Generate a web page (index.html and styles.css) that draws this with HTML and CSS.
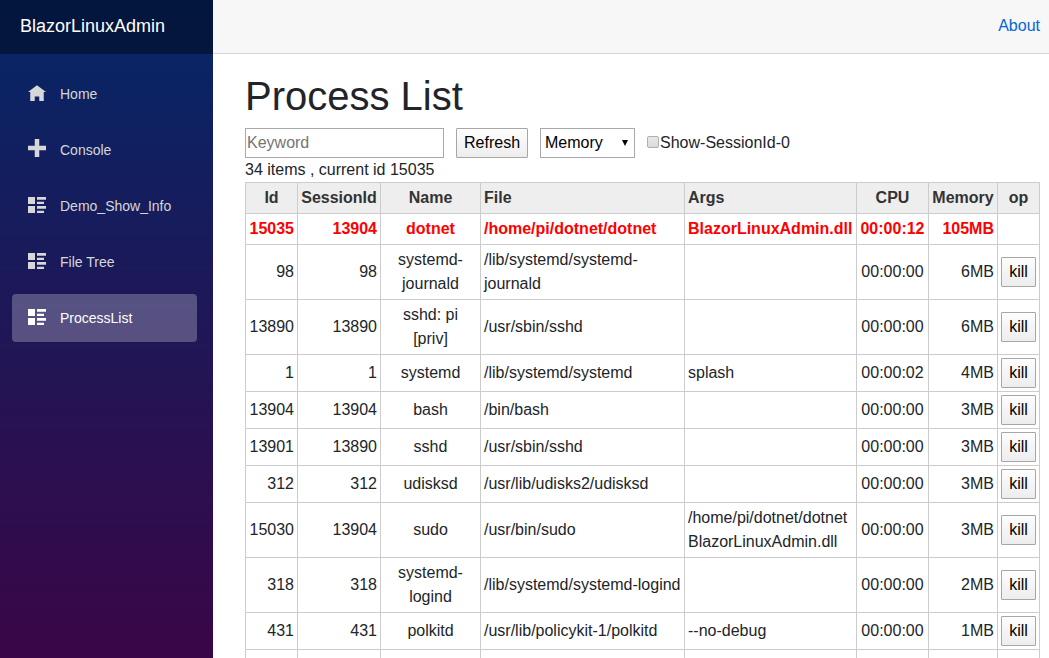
FILE: index.html
```html
<!DOCTYPE html>
<html lang="en">
<head>
<meta charset="utf-8">
<title>BlazorLinuxAdmin</title>
<link rel="stylesheet" href="styles.css">
</head>
<body>
<svg class="sprite" aria-hidden="true">
  <symbol id="home" viewBox="0 -1 8 8"><path d="M4 0l-4 3h1v4h2v-2h2v2h2v-4.03l1 .03-4-3z"/></symbol>
  <symbol id="plus" viewBox="0 0 8 8"><path d="M3 0v3h-3v2h3v3h2v-3h3v-2h-3v-3h-2z"/></symbol>
  <symbol id="list" viewBox="0 0 18 18"><path d="M0 2h7v7h-7zM9 2h9v2.7h-9zM9 6.7h7v2.3h-7zM0 11h7v7h-7zM9 11h9v2.7h-9zM9 15.7h7v2.3h-7z"/></symbol>
</svg>
<div class="app">
  <aside class="sidebar">
    <div class="brand-row"><a class="brand" href="#">BlazorLinuxAdmin</a></div>
    <nav class="nav">
      <a class="nav-link" href="#"><svg class="icon"><use href="#home"/></svg>Home</a>
      <a class="nav-link" href="#"><svg class="icon"><use href="#plus"/></svg>Console</a>
      <a class="nav-link" href="#"><svg class="icon"><use href="#list"/></svg>Demo_Show_Info</a>
      <a class="nav-link" href="#"><svg class="icon"><use href="#list"/></svg>File Tree</a>
      <a class="nav-link active" href="#" aria-current="page"><svg class="icon"><use href="#list"/></svg>ProcessList</a>
    </nav>
  </aside>
  <div class="main">
    <header class="top-row"><a class="about" href="#">About</a></header>
    <main class="content">
      <h1 class="title">Process List</h1>
      <div class="toolbar">
        <input class="keyword" type="text" placeholder="Keyword" aria-label="Keyword">
        <button class="btn" type="button">Refresh</button>
        <span class="select-wrap">
          <select class="sort" aria-label="Sort by"><option>Memory</option><option>CPU</option></select>
          <svg class="arrow" viewBox="0 0 6 6" aria-hidden="true"><path d="M0 0h6L3 6z"/></svg>
        </span>
        <label class="check"><input class="checkbox" type="checkbox">Show-SessionId-0</label>
      </div>
      <div class="summary">34 items , current id 15035</div>
      <table class="processes">
        <colgroup><col class="c-id"><col class="c-session"><col class="c-name"><col class="c-file"><col><col class="c-cpu"><col class="c-memory"><col class="c-op"></colgroup>
        <thead>
          <tr><th>Id</th><th>SessionId</th><th>Name</th><th class="left">File</th><th class="left">Args</th><th>CPU</th><th>Memory</th><th>op</th></tr>
        </thead>
        <tbody>
          <tr class="current"><td class="num">15035</td><td class="num">13904</td><td>dotnet</td><td class="left">/home/pi/dotnet/dotnet</td><td class="left">BlazorLinuxAdmin.dll</td><td>00:00:12</td><td class="num">105MB</td><td></td></tr>
          <tr><td class="num">98</td><td class="num">98</td><td>systemd-journald</td><td class="left">/lib/systemd/systemd-journald</td><td></td><td>00:00:00</td><td class="num">6MB</td><td><button class="btn" type="button">kill</button></td></tr>
          <tr><td class="num">13890</td><td class="num">13890</td><td>sshd: pi [priv]</td><td class="left">/usr/sbin/sshd</td><td></td><td>00:00:00</td><td class="num">6MB</td><td><button class="btn" type="button">kill</button></td></tr>
          <tr><td class="num">1</td><td class="num">1</td><td>systemd</td><td class="left">/lib/systemd/systemd</td><td class="left">splash</td><td>00:00:02</td><td class="num">4MB</td><td><button class="btn" type="button">kill</button></td></tr>
          <tr><td class="num">13904</td><td class="num">13904</td><td>bash</td><td class="left">/bin/bash</td><td></td><td>00:00:00</td><td class="num">3MB</td><td><button class="btn" type="button">kill</button></td></tr>
          <tr><td class="num">13901</td><td class="num">13890</td><td>sshd</td><td class="left">/usr/sbin/sshd</td><td></td><td>00:00:00</td><td class="num">3MB</td><td><button class="btn" type="button">kill</button></td></tr>
          <tr><td class="num">312</td><td class="num">312</td><td>udisksd</td><td class="left">/usr/lib/udisks2/udisksd</td><td></td><td>00:00:00</td><td class="num">3MB</td><td><button class="btn" type="button">kill</button></td></tr>
          <tr><td class="num">15030</td><td class="num">13904</td><td>sudo</td><td class="left">/usr/bin/sudo</td><td class="left">/home/pi/dotnet/dotnet BlazorLinuxAdmin.dll</td><td>00:00:00</td><td class="num">3MB</td><td><button class="btn" type="button">kill</button></td></tr>
          <tr><td class="num">318</td><td class="num">318</td><td>systemd-logind</td><td class="left">/lib/systemd/systemd-logind</td><td></td><td>00:00:00</td><td class="num">2MB</td><td><button class="btn" type="button">kill</button></td></tr>
          <tr><td class="num">431</td><td class="num">431</td><td>polkitd</td><td class="left">/usr/lib/policykit-1/polkitd</td><td class="left">--no-debug</td><td>00:00:00</td><td class="num">1MB</td><td><button class="btn" type="button">kill</button></td></tr>
          <tr class="tall"><td></td><td></td><td></td><td></td><td></td><td></td><td></td><td></td></tr>
        </tbody>
      </table>
    </main>
  </div>
</div>
</body>
</html>
```
FILE: styles.css
```css
* { box-sizing: border-box; }

body {
  margin: 0;
  font: 16px/24px "Liberation Sans", Arial, sans-serif;
  color: #212529;
  background: #fff;
}

.sprite { display: none; }

.app {
  display: flex;
  height: 100vh;
  overflow: hidden;
}

.sidebar {
  flex: 0 0 213px;
  background: linear-gradient(180deg, #052767 0%, #3a0647 100%);
}

.brand-row {
  display: flex;
  align-items: center;
  height: 54px;
  padding: 0 20px 2px;
  background: rgba(0, 0, 0, 0.4);
}

.brand {
  font-size: 18px;
  color: #fff;
  text-decoration: none;
}

.nav {
  display: flex;
  flex-direction: column;
  gap: 8px;
  padding: 16px 16px 0 12px;
}

.nav-link {
  display: flex;
  align-items: center;
  gap: 14px;
  height: 48px;
  padding: 0 16px;
  border-radius: 4px;
  font-size: 14px;
  color: #d7d7d7;
  text-decoration: none;
}

.nav-link.active {
  background: rgba(255, 255, 255, 0.25);
  color: #fff;
}

.icon {
  width: 18px;
  height: 18px;
  margin-bottom: 4px;
  fill: currentColor;
}

.main {
  flex: 1;
  min-width: 0;
}

.top-row {
  display: flex;
  align-items: center;
  justify-content: flex-end;
  height: 54px;
  padding: 0 9px 2px 32px;
  background: #f7f7f7;
  border-bottom: 1px solid #d6d5d5;
}

.about {
  color: #0366d6;
  text-decoration: none;
}

.content { padding: 18px 9px 0 32px; }

.title {
  margin: 0 0 8px;
  font-size: 40px;
  font-weight: 400;
  line-height: 48px;
}

.toolbar {
  display: flex;
  align-items: center;
  gap: 12px;
}

.keyword {
  width: 199px;
  height: 30px;
  padding: 1px;
  border: 1px solid #a9a9a9;
  font: inherit;
}

.keyword::placeholder { color: #757575; }

.btn {
  height: 30px;
  padding: 0 7px;
  border: 1px solid #a6a6a6;
  border-radius: 1px;
  background: linear-gradient(#fdfdfd, #ededed);
  font: inherit;
  color: #000;
}

.select-wrap { position: relative; }

.sort {
  display: block;
  width: 95px;
  height: 30px;
  padding: 0 4px;
  border: 1px solid #a9a9a9;
  border-radius: 0;
  background: #fff;
  appearance: none;
  font: inherit;
  color: #000;
}

.arrow {
  position: absolute;
  top: 12px;
  right: 7px;
  width: 6px;
  height: 6px;
  pointer-events: none;
}

.check {
  display: flex;
  align-items: center;
}

.checkbox {
  width: 12px;
  height: 12px;
  margin: 0 1px 2px 0;
  border: 1px solid #b0b0b0;
  border-radius: 2px;
  background: linear-gradient(#e8e8e8, #dcdcdc);
  appearance: none;
}

.checkbox:checked { background: #0366d6; }

.processes {
  width: 100%;
  table-layout: fixed;
  border-collapse: collapse;
  text-align: center;
}

.processes th,
.processes td {
  padding: 3px;
  border: 1px solid #ccc;
}

.processes th {
  background: #eee;
  color: #333;
}

.processes .left { text-align: left; }
.processes .num { text-align: right; }

.processes .btn {
  display: block;
  margin: 0 auto;
}

.current {
  font-weight: 700;
  color: #f00;
}

.tall { height: 55px; }

.c-id { width: 52px; }
.c-session { width: 83px; }
.c-name { width: 100px; }
.c-file { width: 204px; }
.c-cpu { width: 72px; }
.c-memory { width: 69px; }
.c-op { width: 42px; }
```
